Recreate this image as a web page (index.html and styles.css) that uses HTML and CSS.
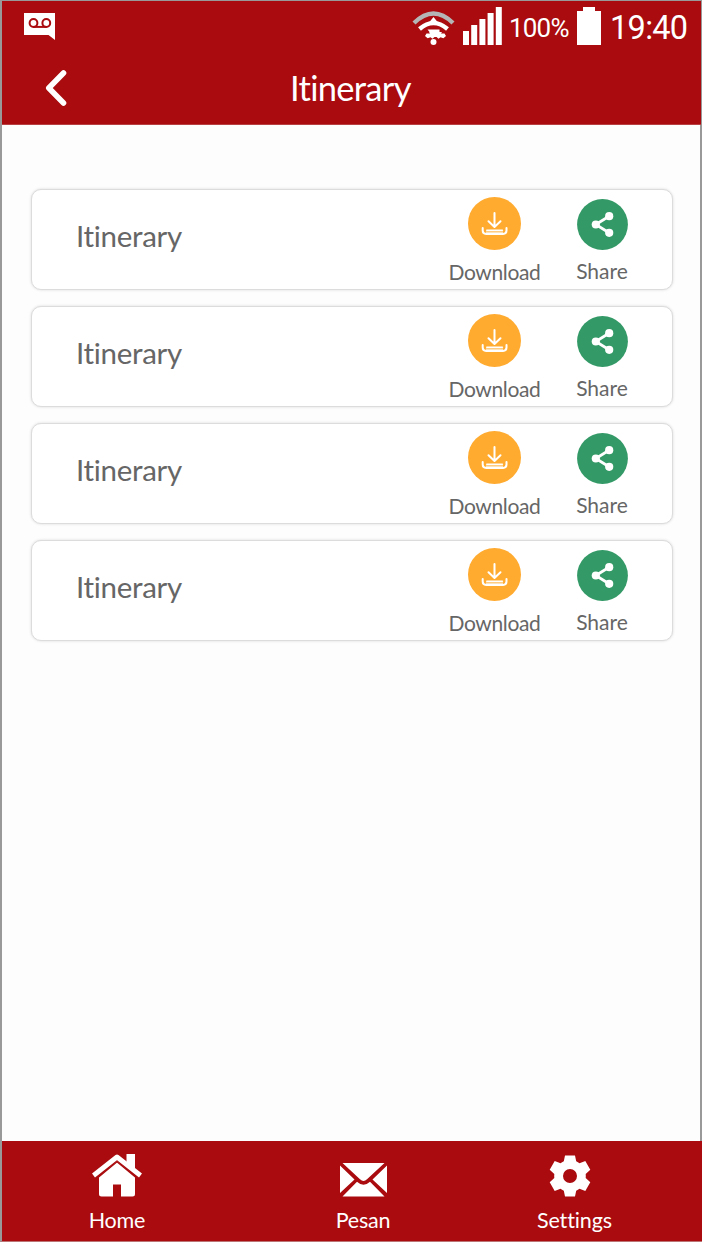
FILE: index.html
```html
<!DOCTYPE html>
<html lang="en">
<head>
<meta charset="utf-8">
<title>Itinerary</title>
<link rel="stylesheet" href="styles.css">
</head>
<body>
<svg class="defs" width="0" height="0" aria-hidden="true">
  <symbol id="download" viewBox="0 0 53 53">
    <circle cx="26.5" cy="26.5" r="26.5" fill="#ffab30"/>
    <g fill="none" stroke="#fff" stroke-width="2" stroke-linecap="round" stroke-linejoin="round">
      <path d="M26.5 16v13.500M20.500 24.200l6 5.800 6-5.800"/>
      <path d="M14.700 31v2.500q0 3.400 3.400 3.400h17q3.400 0 3.400-3.400V31"/>
      <path d="M18.800 33.200h15.600" stroke-width="1.600"/>
    </g>
    <path d="M18 35.200h17" stroke="#ffe3b8" stroke-width="1.600"/>
  </symbol>
  <symbol id="share" viewBox="0 0 51 51">
    <circle cx="25.500" cy="25.500" r="25.400" fill="#339966"/>
    <path d="M32 17.200 18.800 25.500 32 33.800" fill="none" stroke="#fff" stroke-width="2.800"/>
    <g fill="#fff"><circle cx="32.200" cy="17.200" r="4.100"/><circle cx="18.800" cy="25.500" r="4.100"/><circle cx="32.200" cy="33.800" r="4.100"/></g>
  </symbol>
</svg>
<div class="phone">
  <header class="top">
    <div class="status">
      <svg class="voicemail" width="32" height="28" viewBox="0 0 32 28">
        <path d="M0 0h31v27L24.500 22H0z" fill="#fff"/>
        <g fill="none" stroke="#a90b0e" stroke-width="2"><circle cx="9.500" cy="10" r="3.900"/><circle cx="22.300" cy="10" r="3.900"/><path d="M9.500 13.900h12.800"/></g>
      </svg>
      <svg class="wifi" width="44" height="36" viewBox="0 0 44 36">
        <path d="M2 13Q21.500-6 41 13" fill="none" stroke="#b5b5b5" stroke-width="4.400"/>
        <path d="M7.500 19Q21.500 7 35.500 19" fill="none" stroke="#fff" stroke-width="4.400"/>
        <path d="M21.500 7 28 15H15z" fill="#fff"/>
        <path d="M15.500 19.500h12v2.500h2.500l-1 1.500h3.500l1.500 2.500-2.600 2.200-2.900-1-2 1.500-2-1.800h-2l-2 1.800-2-1.500-2.900 1-2.600-2.200 1.500-2.500h3.500l-1-1.500h.5z" fill="#fff"/>
        <circle cx="21.500" cy="32" r="3" fill="#fff"/>
      </svg>
      <svg class="signal" width="39" height="38" viewBox="0 0 39 38" fill="#fff">
        <path d="M0 24h6v14H0zM8.200 18h6v20h-6zM16.400 12h6v26h-6zM24.600 6h6v32h-6zM32.800 0h6v38h-6z"/>
      </svg>
      <span class="percent">100%</span>
      <svg class="battery" width="24" height="38" viewBox="0 0 24 38"><path d="M6 0h12v4h6v34H0V4h6z" fill="#fff"/></svg>
      <span class="clock">19:40</span>
    </div>
    <div class="titlebar">
      <svg class="back" width="24" height="38" viewBox="0 0 24 38"><path d="M19.500 4 4.800 19 19.500 34" fill="none" stroke="#fff" stroke-width="5.600" stroke-linecap="round" stroke-linejoin="round"/></svg>
      <h1 class="title">Itinerary</h1>
    </div>
  </header>
  <main class="list">
    <article class="card"><span class="name">Itinerary</span>
      <div class="action download"><svg width="53" height="53"><use href="#download"/></svg><span class="label">Download</span></div>
      <div class="action share"><svg width="51" height="51"><use href="#share"/></svg><span class="label">Share</span></div></article>
    <article class="card"><span class="name">Itinerary</span>
      <div class="action download"><svg width="53" height="53"><use href="#download"/></svg><span class="label">Download</span></div>
      <div class="action share"><svg width="51" height="51"><use href="#share"/></svg><span class="label">Share</span></div></article>
    <article class="card"><span class="name">Itinerary</span>
      <div class="action download"><svg width="53" height="53"><use href="#download"/></svg><span class="label">Download</span></div>
      <div class="action share"><svg width="51" height="51"><use href="#share"/></svg><span class="label">Share</span></div></article>
    <article class="card"><span class="name">Itinerary</span>
      <div class="action download"><svg width="53" height="53"><use href="#download"/></svg><span class="label">Download</span></div>
      <div class="action share"><svg width="51" height="51"><use href="#share"/></svg><span class="label">Share</span></div></article>
  </main>
</div>
<nav class="nav">
  <div class="tab home">
    <svg width="52" height="43" viewBox="0 0 52 43" fill="#fff">
      <path d="M2.500 21.500 26 3l23.500 18.500" fill="none" stroke="#fff" stroke-width="4.800" stroke-linejoin="round"/>
      <path d="M35.500 0h8.500v17l-8.500-7z"/>
      <path d="M26 7.500 44 22.500V40q0 2.500-2.500 2.500H30V30.500h-8v12H10.500Q8 42.500 8 40V22.500z"/>
      <path d="M5.500 24.600 26 7.800l20.500 16.800" fill="none" stroke="#a90b0e" stroke-width="1.400"/>
    </svg>
    <span class="label">Home</span>
  </div>
  <div class="tab mail">
    <svg width="47" height="34" viewBox="0 0 47 34" fill="#fff">
      <path d="M2.500 0h42L27 16.300q-3.500 3.200-7 0zM0 2.500 14.500 16.500 0 30zM47 2.500 32.500 16.500 47 30zM2.500 33.500 17 18.800q6.500 6 13 0L44.500 33.500z"/>
    </svg>
    <span class="label">Pesan</span>
  </div>
  <div class="tab settings">
    <svg width="42" height="42" viewBox="0 0 42 42">
      <path fill="#fff" fill-rule="evenodd" d="M16 .5h10l1.200 5.800q1.800.8 3.300 1.900l5.800-2.100 5 8.600-4.600 4.200q.2 2.100 0 4.200l4.600 4.200-5 8.600-5.800-2.100q-1.500 1.200-3.300 1.900L26 41.500H16l-1.200-5.800q-1.800-.7-3.300-1.900l-5.800 2.100-5-8.600 4.600-4.200q-.2-2.100 0-4.200L.700 14.700l5-8.600 5.800 2.100q1.500-1.100 3.300-1.900zM21 14a7 7 0 1 0 0 14 7 7 0 0 0 0-14z"/>
    </svg>
    <span class="label">Settings</span>
  </div>
</nav>
</body>
</html>
```
FILE: styles.css
```css
* { box-sizing: border-box; }
body {
  margin: 0;
  width: 702px;
  height: 1242px;
  display: flex;
  flex-direction: column;
  overflow: hidden;
  background: #fdfdfd;
  font-family: Lato, "Liberation Sans", sans-serif;
  font-variant-ligatures: none;
  border-top: 1px solid #999;
}
.defs { position: absolute; }
svg { display: block; flex: none; }
.phone {
  height: 1140px;
  border-left: 2px solid #999;
  border-right: 2px solid #999;
}
.top {
  height: 124px;
  width: 699px;
  background: #a90b0e;
  color: #fff;
  border-bottom: 1px solid #b84043;
}
.status {
  height: 50px;
  display: flex;
  align-items: flex-start;
  padding-left: 22px;
  font-family: Roboto, sans-serif;
  white-space: nowrap;
}
.voicemail { margin-top: 12px; }
.wifi { margin: 9px 0 0 356px; }
.signal { margin: 6px 0 0 7px; }
.percent { margin: 7px 0 0 7px; width: 61px; font-size: 26px; line-height: 40px; letter-spacing: -.8px; }
.battery { margin: 6px 0 0 7px; }
.clock { margin: 7px 0 0 9px; font-size: 32.500px; line-height: 40px; letter-spacing: -.7px; }
.titlebar {
  display: flex;
  align-items: center;
  height: 73px;
  padding-left: 42px;
}
.back { margin-top: 1px; }
.title {
  margin: 0 0 0 222px;
  font-size: 34.500px;
  font-weight: 400;
  line-height: 44px;
  letter-spacing: -.7px;
  white-space: nowrap;
}
.list {
  display: flex;
  flex-direction: column;
  gap: 17px;
  padding: 64px 27px 0 29px;
}
.card {
  display: flex;
  align-items: flex-start;
  height: 101px;
  margin-bottom: -1px;
  padding-left: 44px;
  border: 1px solid #dcdcdc;
  border-radius: 10px;
  background: #fff;
  box-shadow: 0 0 3px rgba(0, 0, 0, .14);
  color: #666;
}
.name { width: 366px; padding-top: 27px; font-size: 29.500px; line-height: 38px; letter-spacing: -.3px; }
.action {
  display: flex;
  flex-direction: column;
  align-items: center;
}
.action .label { font-size: 21px; line-height: 26px; white-space: nowrap; }
.download { width: 104px; padding-top: 7px; }
.download .label { margin: 9px 0 0 1px; letter-spacing: -.35px; }
.share { width: 60px; margin-left: 26px; padding-top: 9px; }
.share .label { margin-top: 8px; }
.nav {
  height: 101px;
  display: flex;
  padding-left: 48px;
  background: #a90b0e;
  border-left: 2px solid #999;
  border-bottom: 1px solid #bd7474;
  color: #fff;
}
.tab {
  display: flex;
  flex-direction: column;
  align-items: center;
  width: 132px;
}
.tab .label { height: 28px; margin-top: auto; margin-bottom: 7px; font-size: 21.500px; line-height: 28px; letter-spacing: -.2px; }
.home { width: 134px; }
.home svg { margin-top: 13px; }
.mail { margin-left: 113px; }
.mail svg { margin-top: 22px; }
.settings { margin-left: 75px; }
.settings svg { margin-top: 14px; }
.settings .label { margin-left: 9px; letter-spacing: -.1px; }
```
